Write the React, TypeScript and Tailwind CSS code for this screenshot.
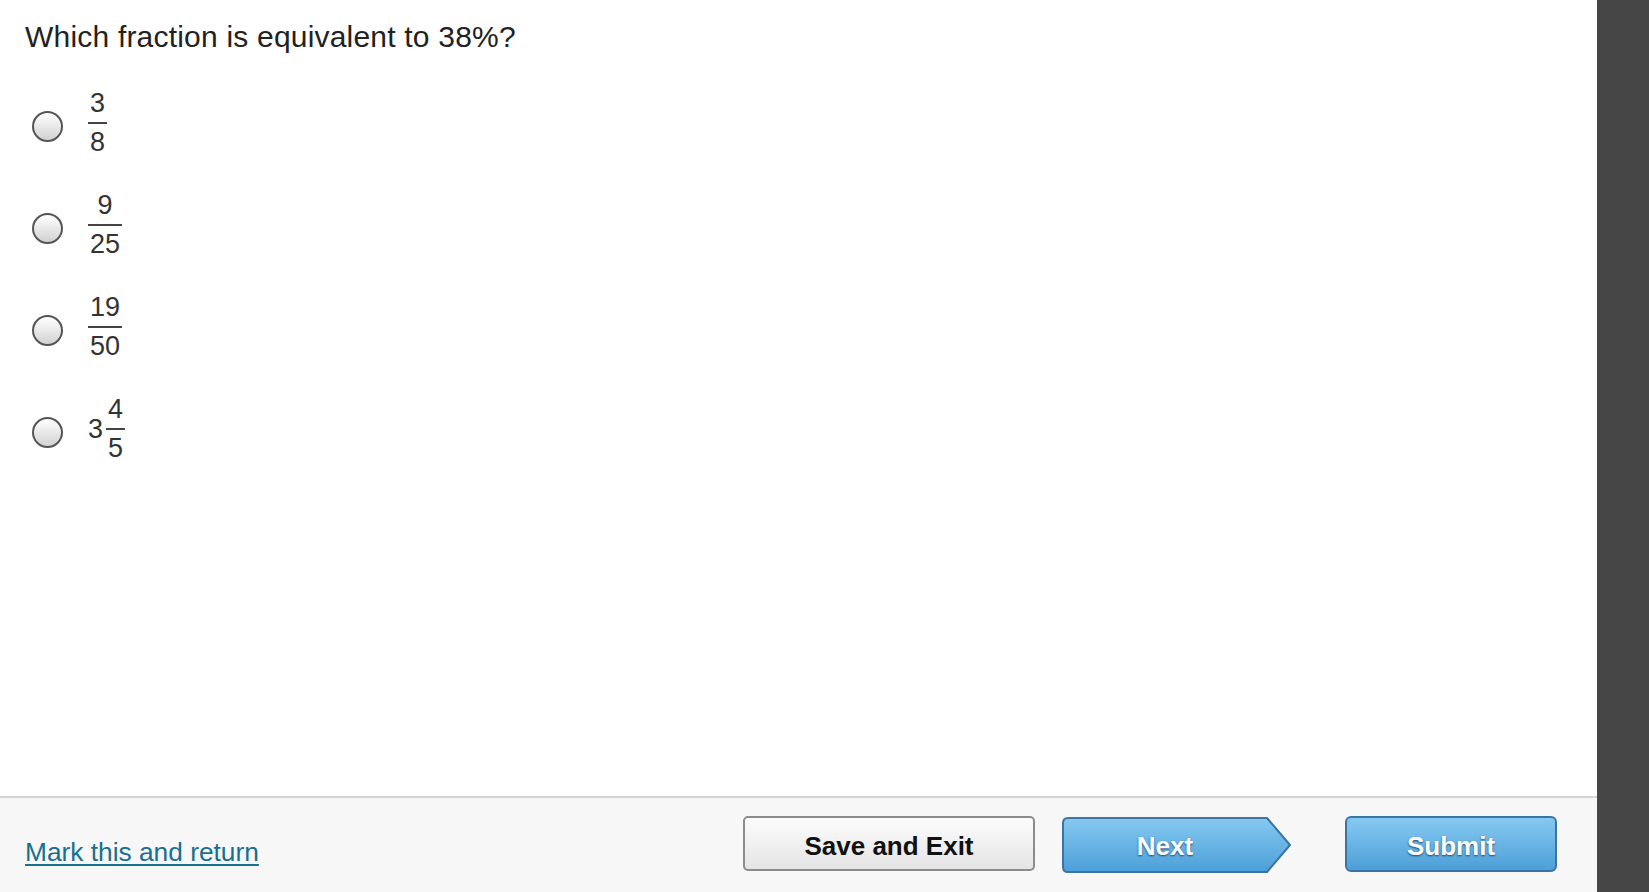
const options = [
  { whole: "", num: "3", den: "8" },
  { whole: "", num: "9", den: "25" },
  { whole: "", num: "19", den: "50" },
  { whole: "3", num: "4", den: "5" },
];

function Fraction({ whole, num, den }: { whole: string; num: string; den: string }) {
  return (
    <div className="flex items-center text-[27px] leading-[27px] text-[#333]">
      {whole && <span className="mr-[3px]">{whole}</span>}
      <div className="flex flex-col items-center">
        <span className="px-[2px]">{num}</span>
        <span className="my-[5px] h-[2px] w-full bg-[#444]" />
        <span className="px-[2px]">{den}</span>
      </div>
    </div>
  );
}

function NextButton() {
  return (
    <div className="relative mt-[1px] h-[56px] w-[229px]">
      <svg width="229" height="56" viewBox="0 0 229 56" className="block">
        <defs>
          <linearGradient id="nextFill" x1="0" y1="0" x2="0" y2="1">
            <stop offset="0" stopColor="#86c9f1" />
            <stop offset="1" stopColor="#4c9fd8" />
          </linearGradient>
        </defs>
        <path
          d="M6 1 H205 L228 28 L205 55 H6 Q1 55 1 50 V6 Q1 1 6 1 Z"
          fill="url(#nextFill)"
          stroke="#3b74a0"
          strokeWidth="2"
          strokeLinejoin="round"
        />
      </svg>
      <div className="absolute inset-0 flex items-center justify-center pr-[23px] pt-[2px] text-[26px] font-bold text-white [text-shadow:0_1px_2px_#1d4a6d]">
        Next
      </div>
    </div>
  );
}

export default function App() {
  return (
    <div className="flex h-[892px] w-full overflow-hidden font-['Liberation_Sans',Arial,sans-serif]">
      <div className="flex w-[1597px] flex-col bg-white">
        <main className="flex-1 pl-[25px] pt-[22px]">
          <h1 className="text-[30px] leading-[30px] tracking-[0.2px] text-[#222]">Which fraction is equivalent to 38%?</h1>
          <div className="mt-[38px] flex flex-col gap-[36px]">
            {options.map((o, i) => (
              <label className="flex items-center gap-[25px] pl-[7px]" key={i}>
                <span className="mt-[6px] h-[31px] w-[31px] rounded-full border-2 border-[#555] bg-linear-to-b from-white to-[#d2d2d2]" />
                <Fraction whole={o.whole} num={o.num} den={o.den} />
              </label>
            ))}
          </div>
        </main>

        <footer className="flex h-[96px] items-start border-t-2 border-[#d4d4d4] bg-[#f7f7f8] pl-[25px] pr-[40px] pt-[18px]">
          <a className="mt-[23px] text-[26.3px] leading-[26px] text-[#17708f] underline underline-offset-[3px]" href="#">
            Mark this and return
          </a>
          <div className="flex-1" />
          <button className="h-[55px] w-[292px] rounded-[5px] border-2 border-[#8c8c8c] bg-linear-to-b from-[#fdfdfd] to-[#e4e4e4] pt-[5px] text-[26px] font-bold text-[#111]">
            Save and Exit
          </button>
          <div className="ml-[27px]">
            <NextButton />
          </div>
          <button className="ml-[54px] h-[56px] w-[212px] rounded-[6px] border-2 border-[#3b74a0] bg-linear-to-b from-[#86c9f1] to-[#4c9fd8] pt-[4px] text-[26px] font-bold text-white [text-shadow:0_1px_2px_#1d4a6d]">
            Submit
          </button>
        </footer>
      </div>
      <aside className="flex-1 bg-[#454545]" />
    </div>
  );
}
